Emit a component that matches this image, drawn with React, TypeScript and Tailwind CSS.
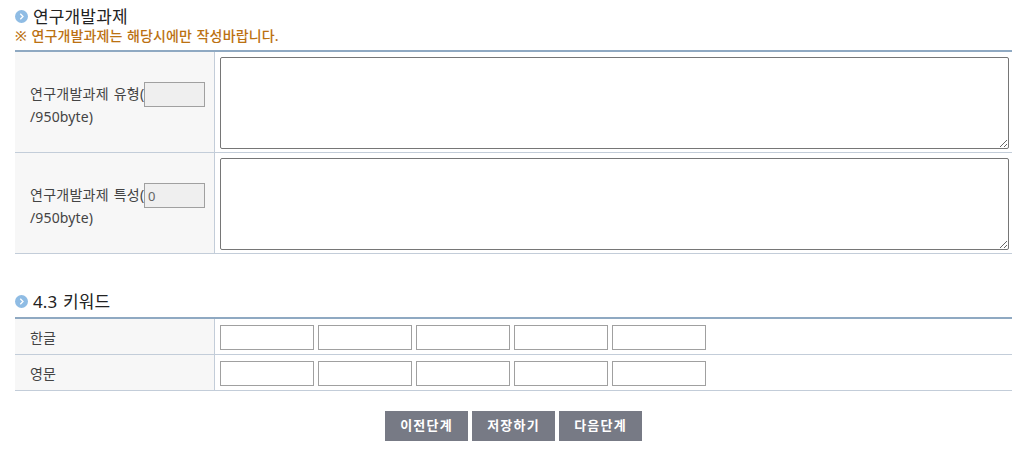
const projectRows = [
  { label: "연구개발과제 유형(", bytes: "" },
  { label: "연구개발과제 특성(", bytes: "0" },
];

const keywordRows = ["한글", "영문"];

const actions = ["이전단계", "저장하기", "다음단계"];

function SectionTitle({ children }: { children: string }) {
  return (
    <h2 className="flex h-[18px] items-center text-[17px] leading-[18px] text-[#222] tracking-[0.15px] [word-spacing:1px]">
      <svg className="mb-[1px] mr-[5px] h-[13px] w-[13px] shrink-0" viewBox="0 0 13 13">
        <circle cx="6.5" cy="6.5" r="6.5" fill="#8fbce4" />
        <path d="M5.3 3.7L8 6.5L5.3 9.3" fill="none" stroke="#fff" strokeWidth="1.3" />
      </svg>
      <span className="whitespace-nowrap">{children}</span>
    </h2>
  );
}

export default function App() {
  return (
    <div
      className="h-[462px] w-[1022px] overflow-hidden bg-white pl-[15px] pr-[10px] pt-2 text-[14px] text-[#444]"
      style={{ fontFamily: '"Noto Sans", "Noto Sans CJK KR", sans-serif' }}
    >
      <SectionTitle>연구개발과제</SectionTitle>
      <p className="h-[24px] whitespace-nowrap text-[14px] font-medium leading-[20px] tracking-[0.14px] text-[#bb7112] [word-spacing:0.7px]">
        ※ 연구개발과제는 해당시에만 작성바랍니다.
      </p>

      <div className="border-t-2 border-[#8fa9c2]">
        {projectRows.map((row) => (
          <div key={row.label} className="flex h-[101px] border-b border-[#c3cdd9]">
            <div className="flex w-[200px] shrink-0 flex-col border-r border-[#c3cdd9] bg-[#f7f7f7] pl-[15px] pt-[30px]">
              <div className="flex h-[25px] items-center">
                <span className="w-[114px] shrink-0 whitespace-nowrap pb-[3px] tracking-[0.25px] [word-spacing:1px]">
                  {row.label}
                </span>
                <input
                  className="h-[25px] w-[61px] border border-[#a0a0a0] bg-[#efefef] px-[3px] text-[13px] text-[#666]"
                  defaultValue={row.bytes}
                  readOnly
                />
              </div>
              <div className="h-[20px] leading-[20px] tracking-[0.15px]">/950byte)</div>
            </div>
            <textarea className="ml-[5px] mt-[5px] h-[92px] w-[789px] resize rounded-[2px] border border-[#767676] bg-white" />
          </div>
        ))}
      </div>

      <div className="mt-[39px]">
        <SectionTitle>4.3 키워드</SectionTitle>
      </div>
      <div className="mt-[6px] border-t-2 border-[#8fa9c2]">
        {keywordRows.map((label) => (
          <div key={label} className="flex h-[36px] border-b border-[#c3cdd9]">
            <div className="flex w-[200px] shrink-0 items-center border-r border-[#c3cdd9] bg-[#f7f7f7] pl-[15px] pt-[1px] tracking-[0.15px]">
              {label}
            </div>
            <div className="flex gap-1 pl-[5px] pt-[6px]">
              {[1, 2, 3, 4, 5].map((n) => (
                <input key={n} className="h-[25px] w-[94px] border border-[#a0a0a0] bg-white px-[3px] text-[13px]" />
              ))}
            </div>
          </div>
        ))}
      </div>

      <div className="mt-[20px] flex gap-1 pl-[370px]">
        {actions.map((label) => (
          <button
            key={label}
            className="h-[30px] w-[83px] whitespace-nowrap bg-[#777a85] text-[13px] font-bold tracking-[1.2px] text-white"
          >
            {label}
          </button>
        ))}
      </div>
    </div>
  );
}
